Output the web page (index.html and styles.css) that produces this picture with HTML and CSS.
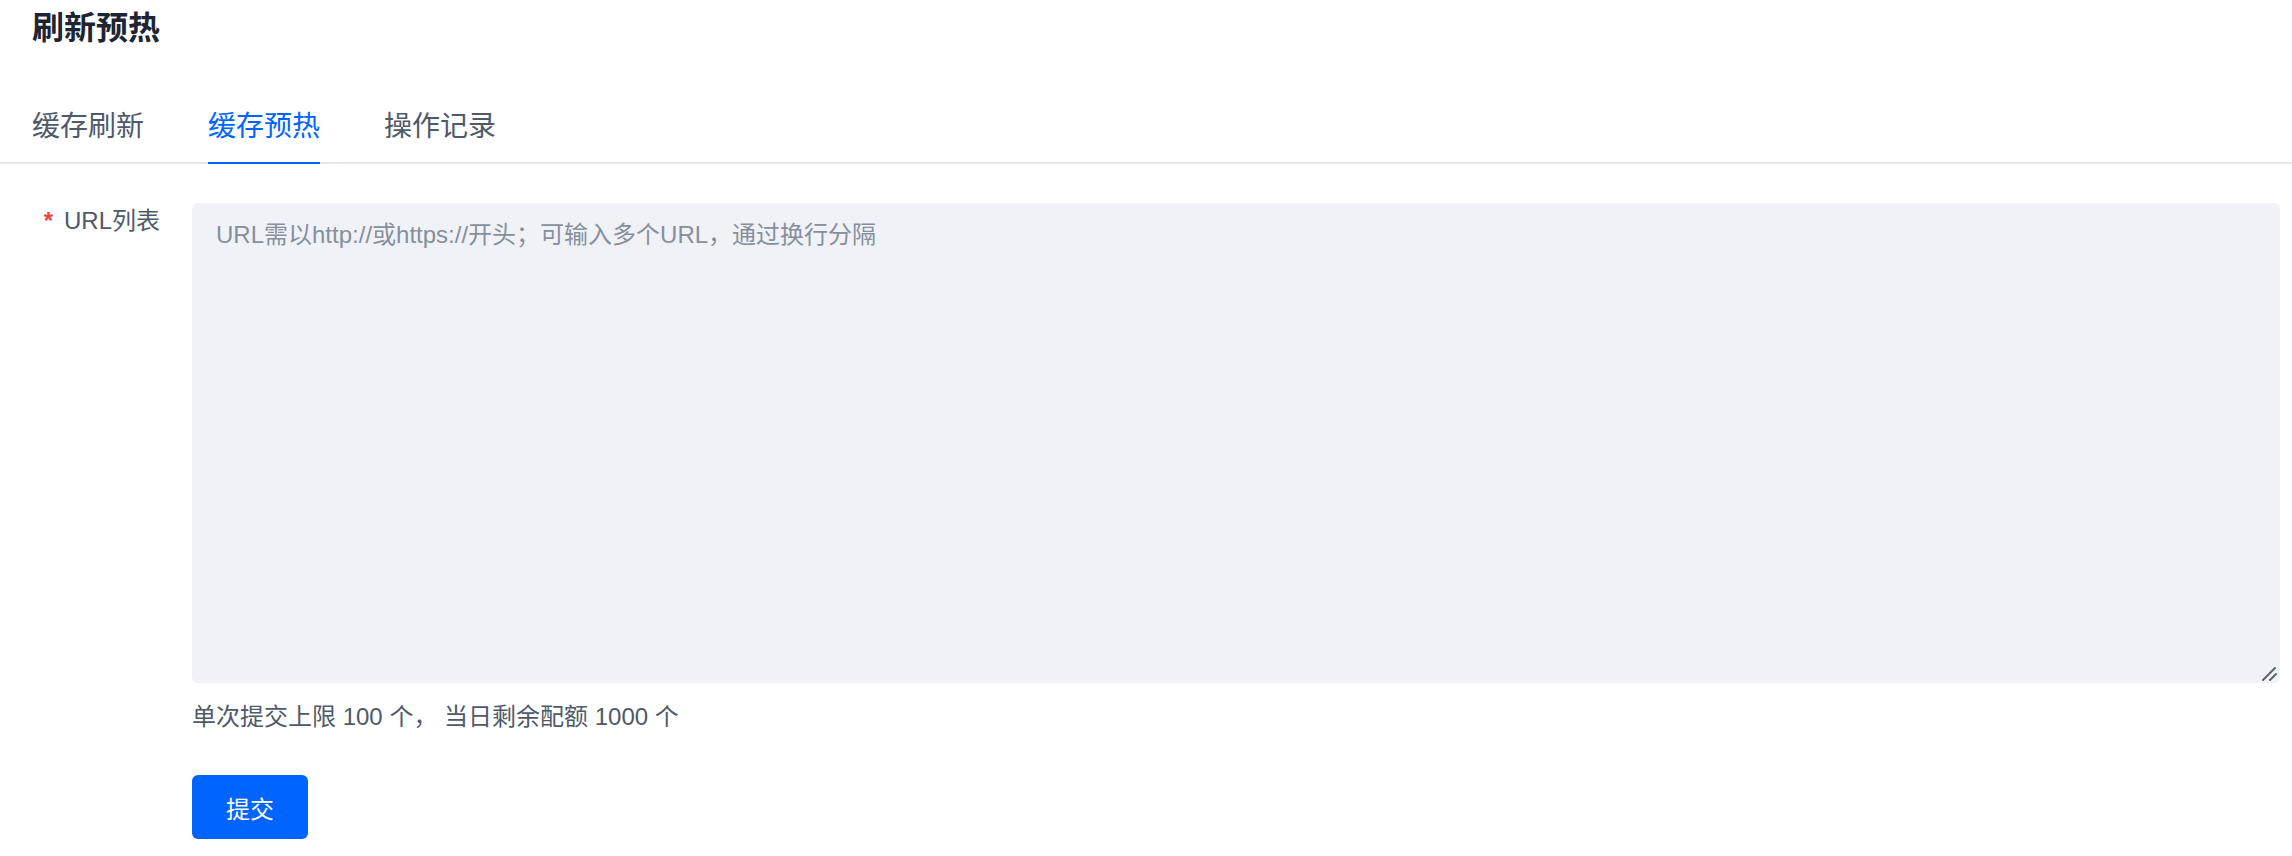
FILE: index.html
```html
<!DOCTYPE html>
<html lang="zh-CN">

<head>
    <title>刷新预热</title>
    <meta charset="UTF-8">
    <meta name="viewport" content="width=device-width, initial-scale=1.0">
    <link rel="stylesheet" href="styles.css">
</head>

<body>
    <div class="page-head">
        <h1 class="page-title">刷新预热</h1>
    </div>

    <div class="tabs">
        <a class="tab">缓存刷新</a>
        <a class="tab active">缓存预热</a>
        <a class="tab">操作记录</a>
    </div>

    <form class="form">
        <div class="form-row">
            <label class="form-label" for="urls"><span class="required">*</span>URL列表</label>
            <div class="form-field">
                <div class="input-wrap">
                    <textarea id="urls" class="url-input" placeholder="URL需以http://或https://开头；可输入多个URL，通过换行分隔"></textarea>
                    <!-- 拖拽角标 -->
                    <svg class="grip" width="16" height="16" viewBox="0 0 16 16">
                        <path d="M2 15 L14 3 M9 15 L15 9" stroke="#5f6368" stroke-width="2" stroke-linecap="round" fill="none"/>
                    </svg>
                </div>
                <div class="form-tip">单次提交上限 100 个， 当日剩余配额 1000 个</div>
                <button type="button" class="btn-submit">提交</button>
            </div>
        </div>
    </form>
</body>

</html>
```

FILE: styles.css
```css
* {
    margin: 0;
    padding: 0;
    box-sizing: border-box;
}

body {
    font-family: "Liberation Sans", "Noto Sans CJK SC", sans-serif;
    color: #4e5969;
    background: #fff;
}

.page-head {
    padding: 4px 32px 0;
}

.page-title {
    font-size: 32px;
    line-height: 48px;
    font-weight: 600;
    color: #1d2433;
}

.tabs {
    display: flex;
    gap: 64px;
    margin-top: 54px;
    padding: 0 32px;
    border-bottom: 2px solid #e5e7ee;
}

.tab {
    font-size: 28px;
    line-height: 42px;
    padding-bottom: 14px;
    margin-bottom: -2px;
    border-bottom: 2px solid transparent;
    color: #4e5969;
    cursor: pointer;
}

.tab.active {
    color: #0064ff;
    border-bottom-color: #0064ff;
}

.form {
    padding: 39px 12px 0 32px;
}

.form-row {
    display: flex;
    gap: 32px;
}

.form-label {
    width: 128px;
    text-align: right;
    font-size: 24px;
    line-height: 36px;
    color: #4e5969;
    white-space: nowrap;
}

.required {
    color: #f53f3f;
    font-weight: bold;
    margin-right: 11px;
}

.form-field {
    flex: 1;
}

.input-wrap {
    position: relative;
}

.url-input {
    display: block;
    width: 100%;
    height: 480px;
    padding: 14px 24px;
    border: 0;
    border-radius: 6px;
    outline: none;
    resize: none;
    background: #f1f2f7;
    font-family: inherit;
    font-size: 24px;
    line-height: 36px;
    color: #1d2433;
}

.url-input::placeholder {
    color: #86909c;
}

.grip {
    position: absolute;
    right: 3px;
    bottom: 2px;
    pointer-events: none;
}

.form-tip {
    margin-top: 16px;
    font-size: 24px;
    line-height: 36px;
    color: #4e5969;
}

.btn-submit {
    display: block;
    margin-top: 40px;
    width: 116px;
    height: 64px;
    border: 0;
    border-radius: 6px;
    background: #0064ff;
    color: #fff;
    font-family: inherit;
    font-size: 24px;
    cursor: pointer;
}
```
